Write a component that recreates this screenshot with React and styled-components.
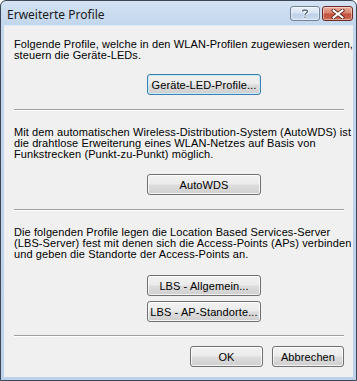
import React from "react";
import styled, { createGlobalStyle } from "styled-components";

const Global = createGlobalStyle`
  html, body { margin: 0; padding: 0; background: #ffffff; }
  * { box-sizing: border-box; }
`;

const Window = styled.div`
  width: 357px;
  height: 381px;
  border: 1px solid #3b4656;
  border-radius: 6px 6px 0 0;
  background: linear-gradient(#d4e3f4 0px, #c2d6ec 24px, #bcd2ea 100%);
  display: flex;
  flex-direction: column;
  padding: 0 3px 3px 3px;
  font-family: "Liberation Sans", Arial, sans-serif;
  overflow: hidden;
`;

const TitleBar = styled.div`
  height: 24px;
  display: flex;
  align-items: flex-start;
  padding-top: 5px;
  flex-shrink: 0;
`;

const Title = styled.div`
  font-family: "Noto Sans", "Liberation Sans", sans-serif;
  font-size: 12px;
  line-height: 16px;
  color: #1a1a1a;
  margin-left: 3px;
  margin-top: 1px;
`;

const CaptionButtons = styled.div`
  margin-left: auto;
  display: flex;
  gap: 2px;
`;

const CaptionButton = styled.div`
  width: ${(p) => p.$w}px;
  height: 15px;
  border-radius: 3px;
  border: 1px solid ${(p) => (p.$close ? "#6e2a22" : "#6f8299")};
  background: ${(p) =>
    p.$close
      ? "linear-gradient(#e8ad9f 0%, #d98470 45%, #c4503d 55%, #c86a54 100%)"
      : "linear-gradient(#eaf1f9 0%, #d7e3f1 45%, #bfd1e7 55%, #cddcee 100%)"};
  box-shadow: inset 0 0 0 1px rgba(255, 255, 255, 0.45);
  display: flex;
  align-items: center;
  justify-content: center;
`;

const Client = styled.div`
  flex: 1;
  background: #f0f0f0;
  display: flex;
  flex-direction: column;
  padding: 0 9px 0 10px;
  border-top: 1px solid #e2ebf5;
`;

const Text = styled.p`
  margin: ${(p) => p.$mt}px 0 0 0;
  font-size: 11px;
  line-height: 11px;
  color: #000;
  letter-spacing: 0.1px;
`;

const Line = styled.span`
  display: block;
  white-space: nowrap;
`;

const Button = styled.button`
  width: ${(p) => p.$w || 114}px;
  height: 21px;
  margin: ${(p) => p.$mt || 0}px 0 0 ${(p) => p.$ml || 0}px;
  padding: 0;
  border: 1px solid ${(p) => (p.$focus ? "#3c7fb1" : "#707070")};
  border-radius: 3px;
  background: linear-gradient(#f2f2f2 0%, #ebebeb 48%, #dddddd 52%, #cfcfcf 100%);
  box-shadow: inset 0 0 0 1px ${(p) => (p.$focus ? "#c6ecfb" : "rgba(255,255,255,0.75)")};
  font-family: "Liberation Sans", Arial, sans-serif;
  font-size: 11px;
  letter-spacing: 0.1px;
  color: #000;
  display: flex;
  align-items: center;
  justify-content: center;
  flex-shrink: 0;
`;

const Separator = styled.div`
  height: 2px;
  margin-top: ${(p) => p.$mt}px;
  border-top: 1px solid #a0a0a0;
  border-bottom: 1px solid #ffffff;
  flex-shrink: 0;
`;

const Footer = styled.div`
  display: flex;
  justify-content: flex-end;
  gap: 9px;
  margin-top: 9px;
`;

function HelpGlyph() {
  return (
    <svg width="10" height="11" viewBox="0 0 10 11">
      <path
        d="M2.5 3.5 C2.5 1.5 7.5 1.5 7.5 3.5 C7.5 5 5 5 5 7"
        fill="none"
        stroke="#ffffff"
        strokeWidth="3"
      />
      <path
        d="M2.5 3.5 C2.5 1.5 7.5 1.5 7.5 3.5 C7.5 5 5 5 5 7"
        fill="none"
        stroke="#56687e"
        strokeWidth="1.4"
      />
      <rect x="3.8" y="8" width="2.4" height="2.4" fill="#ffffff" />
      <rect x="4.3" y="8.5" width="1.4" height="1.4" fill="#56687e" />
    </svg>
  );
}

function CloseGlyph() {
  return (
    <svg width="14" height="10" viewBox="0 0 14 10">
      <path d="M2.5 1.5 L11.5 8.5 M11.5 1.5 L2.5 8.5" stroke="#5a2018" strokeWidth="3.6" strokeLinecap="square" />
      <path d="M2.5 1.5 L11.5 8.5 M11.5 1.5 L2.5 8.5" stroke="#ffffff" strokeWidth="2" strokeLinecap="square" />
    </svg>
  );
}

export default function App() {
  return (
    <>
      <Global />
      <Window>
        <TitleBar>
          <Title>Erweiterte Profile</Title>
          <CaptionButtons>
            <CaptionButton $w={30}>
              <HelpGlyph />
            </CaptionButton>
            <CaptionButton $w={31} $close>
              <CloseGlyph />
            </CaptionButton>
          </CaptionButtons>
        </TitleBar>
        <Client>
          <Text $mt={13}>
            <Line>Folgende Profile, welche in den WLAN-Profilen zugewiesen werden,</Line>
            <Line>steuern die Geräte-LEDs.</Line>
          </Text>
          <Button $focus $mt={13} $ml={133}>Geräte-LED-Profile...</Button>
          <Separator $mt={14} />

          <Text $mt={16}>
            <Line>Mit dem automatischen Wireless-Distribution-System (AutoWDS) ist</Line>
            <Line>die drahtlose Erweiterung eines WLAN-Netzes auf Basis von</Line>
            <Line>Funkstrecken (Punkt-zu-Punkt) möglich.</Line>
          </Text>
          <Button $mt={14} $ml={133}>AutoWDS</Button>
          <Separator $mt={14} />

          <Text $mt={16}>
            <Line>Die folgenden Profile legen die Location Based Services-Server</Line>
            <Line>(LBS-Server) fest mit denen sich die Access-Points (APs) verbinden</Line>
            <Line>und geben die Standorte der Access-Points an.</Line>
          </Text>
          <Button $mt={15} $ml={133}>LBS - Allgemein...</Button>
          <Button $mt={5} $ml={133}>LBS - AP-Standorte...</Button>
          <Separator $mt={13} />

          <Footer>
            <Button $w={73}>OK</Button>
            <Button $w={72}>Abbrechen</Button>
          </Footer>
        </Client>
      </Window>
    </>
  );
}
